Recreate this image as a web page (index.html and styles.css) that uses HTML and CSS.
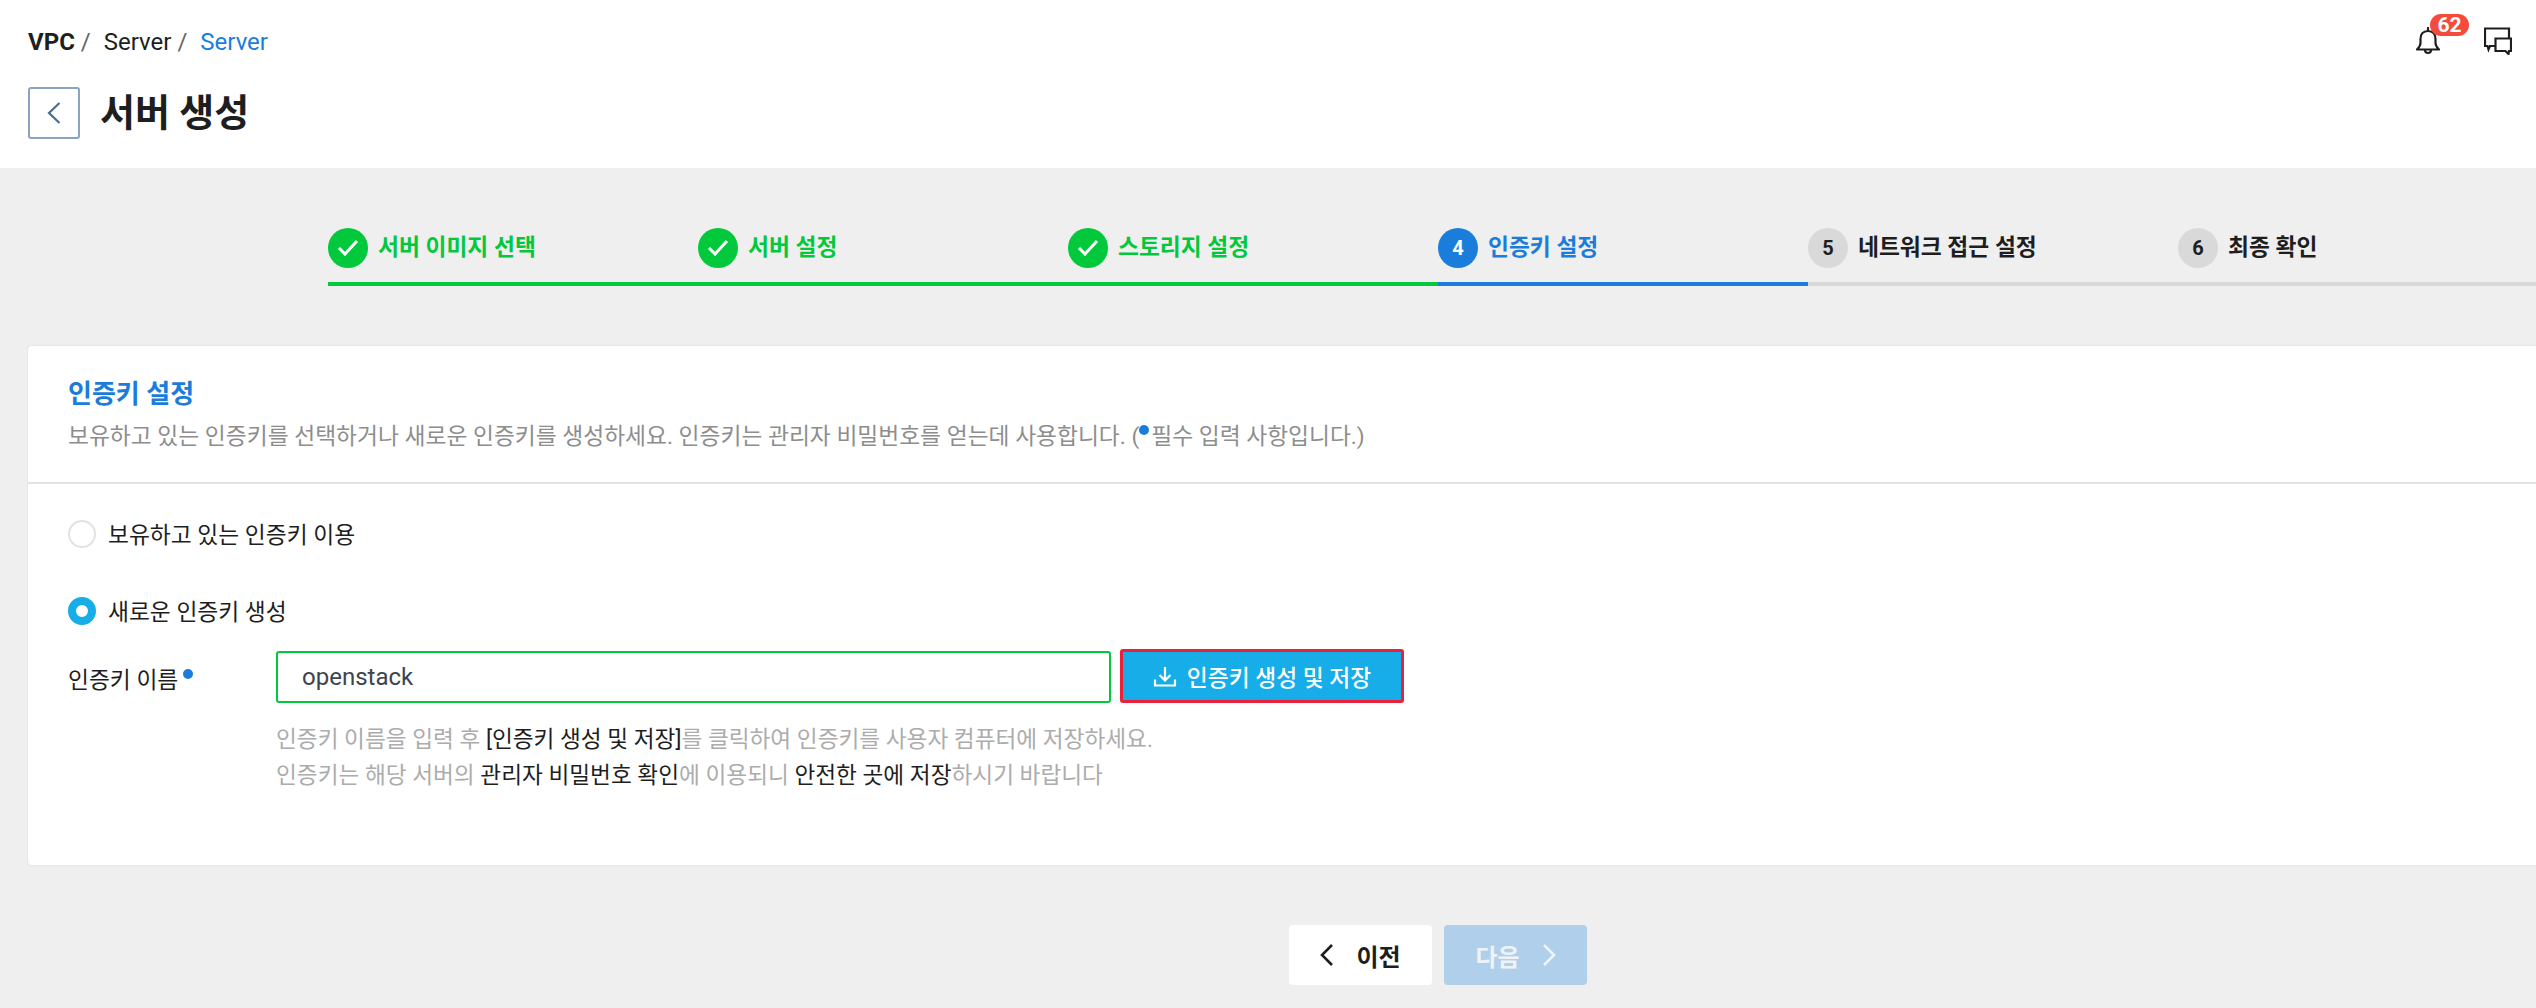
FILE: index.html
```html
<!DOCTYPE html>
<html lang="ko">
<head>
<meta charset="utf-8">
<title>서버 생성</title>
<link rel="stylesheet" href="styles.css">
</head>
<body>
<header class="top">
  <div class="top-row">
    <nav class="crumbs">
      <b>VPC</b><span class="sep">/</span><span class="crumb">Server</span><span class="sep">/</span><span class="crumb current">Server</span>
    </nav>
    <div class="tools">
      <span class="bell">
        <svg width="24" height="28" viewBox="0 0 24 28" fill="none" stroke="#1e1e1e" stroke-width="2.200" stroke-linejoin="round" stroke-linecap="round"><path d="M12 1v3"/><path d="M12 4c-5 0-7.500 3.500-7.500 8v4c0 3-2 5-3.500 6.500h22c-1.500-1.500-3.500-3.500-3.500-6.500v-4c0-4.500-2.500-8-7.500-8z"/><path d="M9 23a3 3 0 0 0 6 0"/></svg>
        <span class="badge">62</span>
      </span>
      <svg class="chat" width="28" height="28" viewBox="0 0 28 28" fill="none" stroke="#1e1e1e" stroke-width="2.200" stroke-linejoin="miter"><path d="M11 19H6l-1.500 3.500L3.500 19H1V1.500h24V11"/><path d="M11.500 11.500H27V24h-2l-.5 3-3-3h-10z"/></svg>
    </div>
  </div>
  <div class="title-row">
    <button class="back" type="button"><svg width="14" height="22" viewBox="0 0 14 22" fill="none" stroke="#4a6d8f" stroke-width="2.200"><path d="M12.500 1 2 11l10.500 10"/></svg></button>
    <h1>서버 생성</h1>
  </div>
</header>

<main class="main">
  <ol class="steps">
    <li class="step done"><span class="dot"><svg width="22" height="18" viewBox="0 0 22 18" fill="none" stroke="#fff" stroke-width="3"><path d="M2 9l6 6L20 2"/></svg></span>서버 이미지 선택</li>
    <li class="step done"><span class="dot"><svg width="22" height="18" viewBox="0 0 22 18" fill="none" stroke="#fff" stroke-width="3"><path d="M2 9l6 6L20 2"/></svg></span>서버 설정</li>
    <li class="step done"><span class="dot"><svg width="22" height="18" viewBox="0 0 22 18" fill="none" stroke="#fff" stroke-width="3"><path d="M2 9l6 6L20 2"/></svg></span>스토리지 설정</li>
    <li class="step active"><span class="dot">4</span>인증키 설정</li>
    <li class="step"><span class="dot">5</span>네트워크 접근 설정</li>
    <li class="step"><span class="dot">6</span>최종 확인</li>
  </ol>

  <section class="card">
    <div class="card-head">
      <h2>인증키 설정</h2>
      <p>보유하고 있는 인증키를 선택하거나 새로운 인증키를 생성하세요. 인증키는 관리자 비밀번호를 얻는데 사용합니다. (<i class="req first"></i>필수 입력 사항입니다.)</p>
    </div>
    <div class="card-body">
      <label class="radio"><span class="ring"></span><span class="radio-text">보유하고 있는 인증키 이용</span></label>
      <label class="radio on"><span class="ring"></span><span class="radio-text">새로운 인증키 생성</span></label>
      <div class="field">
        <div class="field-label">인증키 이름<i class="req"></i></div>
        <div class="field-main">
          <div class="input-row">
            <input class="input" type="text" value="openstack">
            <button class="make" type="button"><svg width="24" height="24" viewBox="0 0 24 24" fill="none" stroke="#fff" stroke-width="2.200"><path d="M12 3v13M6.500 11l5.500 5.500 5.500-5.500M2 15.500v6h20v-6"/></svg>인증키 생성 및 저장</button>
          </div>
          <p class="hint">인증키 이름을 입력 후 <em>[인증키 생성 및 저장]</em>를 클릭하여 인증키를 사용자 컴퓨터에 저장하세요.<br>인증키는 해당 서버의 <em>관리자 비밀번호 확인</em>에 이용되니 <em>안전한 곳에 저장</em>하시기 바랍니다</p>
        </div>
      </div>
    </div>
  </section>

  <div class="pager">
    <button class="nav prev" type="button"><svg width="14" height="24" viewBox="0 0 14 24" fill="none" stroke="#1e1e1e" stroke-width="2.600"><path d="M12 2 2 12l10 10"/></svg>이전</button>
    <button class="nav next" type="button">다음<svg width="14" height="24" viewBox="0 0 14 24" fill="none" stroke="#eef3f8" stroke-width="2.600"><path d="M2 2l10 10L2 22"/></svg></button>
  </div>
</main>
</body>
</html>
```
FILE: styles.css
```css
* { box-sizing: border-box; }
html, body { margin: 0; height: 100%; overflow: hidden; }
body {
  background: #efefef;
  color: #1e1e1e;
  font-family: Roboto, "Noto Sans CJK KR", sans-serif;
  font-size: 22.75px;
}
.top { background: #fff; height: 168px; padding: 27px 28px 0; }
.top-row { display: flex; justify-content: space-between; align-items: flex-start; height: 30px; }
.crumbs { font-size: 24px; line-height: 30px; white-space: nowrap; }
.crumbs b { font-weight: 700; }
.sep { color: #666; margin: 0 13px 0 6px; }
.crumb + .sep { margin-right: 13px; }
.current { color: #1a7ddb; }
.tools { display: flex; align-items: flex-start; gap: 44px; margin-right: -4px; }
.bell { position: relative; display: block; width: 24px; height: 28px; }
.bell svg { display: block; }
.badge {
  position: absolute; left: 14px; top: -13px;
  width: 39px; height: 22px; border-radius: 11px;
  background: #f44b3c; color: #fff;
  font-size: 21px; font-weight: 700; line-height: 22px; text-align: center;
}
.chat { display: block; }
.title-row { display: flex; align-items: center; gap: 20px; margin-top: 30px; }
.back {
  width: 52px; height: 52px; padding: 0;
  display: flex; align-items: center; justify-content: center;
  background: #fff; border: 2px solid #8aa3bf; border-radius: 3px;
}
h1 { margin: 0; font-size: 38px; line-height: 52px; font-weight: 700; letter-spacing: 0; }

.main { padding: 60px 0 0 28px; width: 2580px; }
.steps {
  list-style: none; margin: 0 0 0 300px; padding: 0;
  display: flex;
}
.step {
  flex: 0 0 370px; height: 58px;
  display: flex; align-items: flex-start; gap: 10px;
  border-bottom: 4px solid #d9d9d9;
  font-size: 22.75px; font-weight: 700; line-height: 40px;
  white-space: nowrap;
}
.dot {
  width: 40px; height: 40px; border-radius: 50%;
  background: #d9d9d9; display: flex; align-items: center; justify-content: center;
  font-size: 20px; font-weight: 700; line-height: 1;
}
.step.done { color: #02c83c; border-color: #02c83c; }
.step.done .dot { background: #02c83c; }
.step.active { color: #1a7ddb; border-color: #1a7ddb; }
.step.active .dot { background: #1a7ddb; color: #fff; }

.card {
  margin-top: 60px; height: 519px; width: 2552px;
  background: #fff; border-radius: 4px;
  box-shadow: 0 0 2px rgba(0,0,0,.12);
}
.card-head { height: 138px; padding: 30px 40px 0; border-bottom: 2px solid #e2e2e2; }
h2 { margin: 0; font-size: 26px; line-height: 36px; font-weight: 700; color: #1a7ddb; }
.card-head p { margin: 8px 0 0; font-size: 22.75px; line-height: 34px; color: #8d8d8d; white-space: nowrap; }
.req { display: inline-block; width: 10px; height: 10px; border-radius: 50%; background: #1a7ddb; vertical-align: 9px; margin-left: 5px; }
.req.first { margin: 0 2px 0 0; }
.card-body { padding: 36px 40px 0; }
.radio { display: flex; align-items: center; gap: 12px; height: 28px; font-size: 22.75px; line-height: 28px; white-space: nowrap; }
.radio + .radio { margin-top: 49px; }
.radio-text { margin-top: 4px; }
.ring { width: 28px; height: 28px; border-radius: 50%; border: 2px solid #e2e2e2; background: #fff; }
.radio.on .ring { border: 8px solid #16ade9; }
.field { display: flex; margin-top: 24px; }
.field-label { width: 208px; font-size: 22.75px; line-height: 32px; padding-top: 16px; white-space: nowrap; }
.input-row { display: flex; align-items: flex-end; gap: 9px; }
.input {
  width: 835px; height: 52px; padding: 0 24px;
  border: 2px solid #02c83c; border-radius: 3px; outline: none;
  font: 24px Roboto, sans-serif; color: #3d4450; background: #fff;
}
.make {
  width: 284px; height: 54px; padding: 0;
  display: flex; align-items: center; justify-content: center; gap: 10px;
  background: #16ade9; color: #fff;
  border: 3px solid #e8213c; border-radius: 3px;
  font: 500 22.75px Roboto, "Noto Sans CJK KR", sans-serif;
}
.hint { margin: 19px 0 0; font-size: 22.65px; line-height: 35.5px; color: #acacac; white-space: nowrap; }
.hint em { font-style: normal; color: #1e1e1e; }

.pager { display: flex; justify-content: flex-start; gap: 12px; margin: 60px 0 0 1261px; }
.nav {
  width: 143px; height: 60px; padding: 0; border: 0; border-radius: 4px;
  display: flex; align-items: center; justify-content: center; gap: 22px;
  font: 700 24px Roboto, "Noto Sans CJK KR", sans-serif;
}
.prev { background: #fff; color: #1e1e1e; }
.next { background: #b0cfea; color: #eef3f8; }
```
